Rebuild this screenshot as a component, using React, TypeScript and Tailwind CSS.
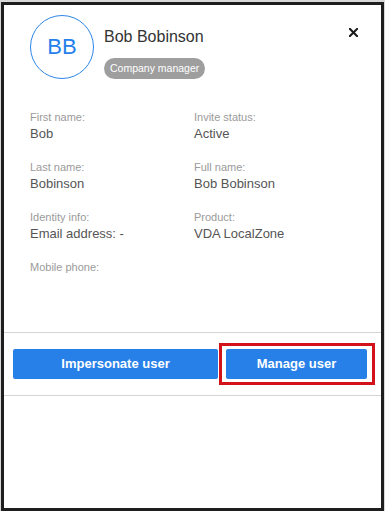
const campos = [
  { etiqueta: "First name:", valor: "Bob" },
  { etiqueta: "Invite status:", valor: "Active" },
  { etiqueta: "Last name:", valor: "Bobinson" },
  { etiqueta: "Full name:", valor: "Bob Bobinson" },
  { etiqueta: "Identity info:", valor: "Email address: -" },
  { etiqueta: "Product:", valor: "VDA LocalZone" },
  { etiqueta: "Mobile phone:", valor: "" },
];

function Campo({ etiqueta, valor }: { etiqueta: string; valor: string }) {
  return (
    <div className="flex flex-col gap-[2px]">
      <span className="text-[11px] leading-[14px] text-[#9a9a9a]">{etiqueta}</span>
      <span className="h-4 text-[13px] leading-4 text-[#555]">{valor}</span>
    </div>
  );
}

export default function App() {
  return (
    <div
      className="h-[511px] w-[385px] bg-[#d8d8d8] pl-[1px] pr-[1px] pt-[2px]"
      style={{ fontFamily: '"Liberation Sans", Arial, sans-serif' }}
    >
      <div className="flex h-[509px] flex-col border-[3px] border-[#1e1e1e] bg-white">
        <div className="flex items-start pl-[26px] pt-[10px]">
          <div className="flex h-16 w-16 shrink-0 items-center justify-center rounded-full border border-[#2d86e8]">
            <span className="text-[22px] leading-none text-[#2680eb]">BB</span>
          </div>
          <div className="ml-[10px] mt-[12px] flex flex-col items-start">
            <span className="text-[16px] leading-5 text-[#333]">Bob Bobinson</span>
            <span className="mt-[11px] rounded-full bg-[#9e9e9e] px-[6px] text-[10.5px] leading-[21px] text-white">
              Company manager
            </span>
          </div>
          <button type="button" aria-label="Close" className="ml-auto mr-[23px] mt-[13px]">
            <svg width="9" height="9" viewBox="0 0 9 9" className="block">
              <path d="M0.8 0.8 L8.2 8.2 M8.2 0.8 L0.8 8.2" stroke="#1a1a1a" strokeWidth="2" strokeLinecap="square" />
            </svg>
          </button>
        </div>

        <div className="mt-[31px] grid grid-cols-[164px_1fr] gap-y-[18px] pl-[26px]">
          {campos.map((c) => (
            <Campo key={c.etiqueta} etiqueta={c.etiqueta} valor={c.valor} />
          ))}
        </div>

        <div className="mt-[40px] border-y border-[#d4d4d4] py-4">
          <div className="flex items-center pl-[9px]">
            <button
              type="button"
              className="h-[30px] w-[205px] rounded-[2px] bg-[#2680e8] text-[13px] font-bold text-white"
            >
              Impersonate user
            </button>
            <div className="relative ml-2">
              <button
                type="button"
                className="h-[30px] w-[141px] rounded-[2px] bg-[#2680e8] text-[13px] font-bold text-white"
              >
                Manage user
              </button>
              <div className="pointer-events-none absolute -bottom-[6px] -left-[7px] -right-[8px] -top-[6px] border-[3px] border-[#d4121b]" />
            </div>
          </div>
        </div>
      </div>
    </div>
  );
}
